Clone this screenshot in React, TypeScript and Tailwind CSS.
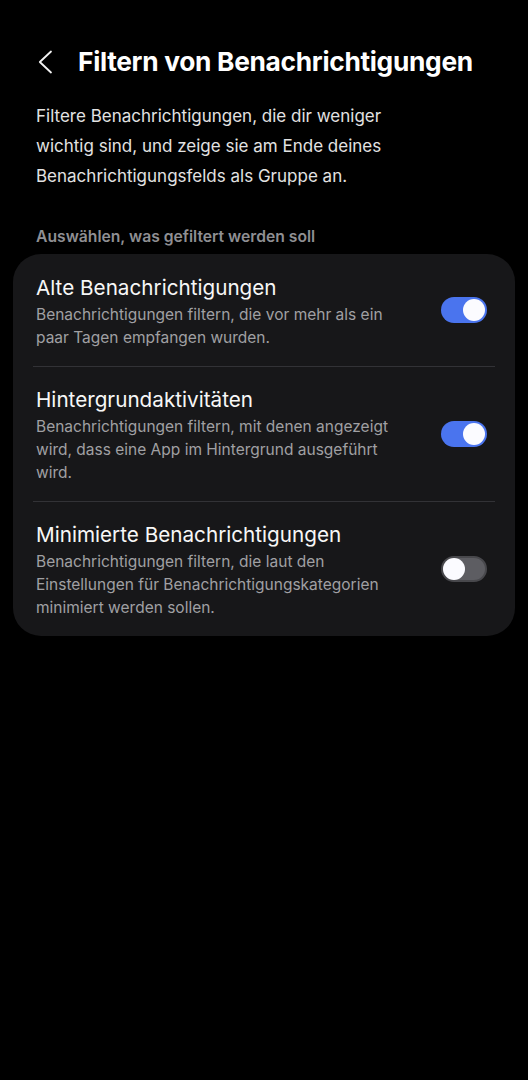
import React from "react";

function Toggle({ on }: { on: boolean }) {
  return on ? (
    <div className="relative h-[26px] w-[46px] shrink-0 rounded-full bg-[#4a74ee]">
      <div className="absolute right-[2px] top-[2px] h-[22px] w-[22px] rounded-full bg-[#fbfbff]" />
    </div>
  ) : (
    <div className="relative h-[26px] w-[46px] shrink-0 rounded-full border-[2px] border-[#48484c] bg-[#5d5d62]">
      <div className="absolute left-[0px] top-[0px] h-[22px] w-[22px] rounded-full bg-[#fbfbff]" />
    </div>
  );
}

function Item({
  title,
  lines,
  on,
  first,
  last,
}: {
  title: string;
  lines: string[];
  on: boolean;
  first?: boolean;
  last?: boolean;
}) {
  return (
    <div>
      <div
        className={`flex items-center pl-[23px] pr-[28px] ${first ? "pt-[21px]" : "pt-[20px]"} pb-[17px]`}
      >
        <div className="flex-1">
          <div className="text-[20.7px] leading-[26px] text-[#f7f7f7] whitespace-nowrap">{title}</div>
          <div className="mt-[2px] text-[15.5px] leading-[23px] text-[#a0a0a3]">
            {lines.map((l, i) => (
              <div key={i} className="whitespace-nowrap">
                {l}
              </div>
            ))}
          </div>
        </div>
        <div className="-mt-[4px]">
          <Toggle on={on} />
        </div>
      </div>
      {!last && <div className="mx-[20px] h-px bg-[#323236]" />}
    </div>
  );
}

export default function App() {
  return (
    <div
      className="min-h-[1080px] w-[528px] bg-black text-white"
      style={{ fontFamily: "Inter, 'Noto Sans', sans-serif" }}
    >
      <div className="flex h-[100px] items-center pl-[38px] pt-[24px]">
        <svg width="16" height="24" viewBox="0 0 16 24" className="shrink-0">
          <path d="M13 1.5 L1.8 12 L13 22.5" fill="none" stroke="#f2f2f2" strokeWidth="1.8" strokeLinecap="round" strokeLinejoin="round" />
        </svg>
        <div className="ml-[24px] text-[26.3px] font-bold leading-[32px] tracking-[-0.3px] text-white whitespace-nowrap">
          Filtern von Benachrichtigungen
        </div>
      </div>
      <div className="px-[36px] pt-[1px] text-[17px] leading-[30px] text-[#e2e2e2]">
        <div className="whitespace-nowrap">Filtere Benachrichtigungen, die dir weniger</div>
        <div className="whitespace-nowrap">wichtig sind, und zeige sie am Ende deines</div>
        <div className="whitespace-nowrap">Benachrichtigungsfelds als Gruppe an.</div>
      </div>
      <div className="mt-[36px] px-[36px] text-[15.7px] font-semibold leading-[20px] text-[#8f8f93]">
        Auswählen, was gefiltert werden soll
      </div>
      <div className="mx-[13px] mt-[7px] rounded-[28px] bg-[#171719]">
        <Item
          first
          title="Alte Benachrichtigungen"
          lines={["Benachrichtigungen filtern, die vor mehr als ein", "paar Tagen empfangen wurden."]}
          on
        />
        <Item
          title="Hintergrundaktivitäten"
          lines={[
            "Benachrichtigungen filtern, mit denen angezeigt",
            "wird, dass eine App im Hintergrund ausgeführt",
            "wird.",
          ]}
          on
        />
        <Item
          last
          title="Minimierte Benachrichtigungen"
          lines={[
            "Benachrichtigungen filtern, die laut den",
            "Einstellungen für Benachrichtigungskategorien",
            "minimiert werden sollen.",
          ]}
          on={false}
        />
      </div>
    </div>
  );
}
